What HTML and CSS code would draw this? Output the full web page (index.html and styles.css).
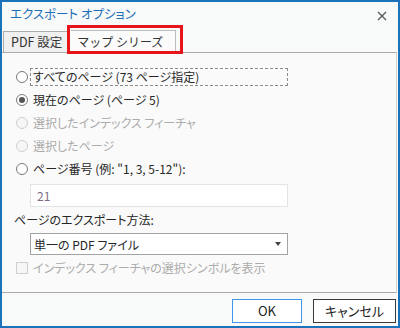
FILE: index.html
```html
<!DOCTYPE html>
<html lang="ja">
<head>
<meta charset="utf-8">
<link rel="stylesheet" href="styles.css">
</head>
<body>
<div class="window">
  <div class="titlebar">
    <span class="title">エクスポート オプション</span>
    <svg class="close" width="10" height="10" viewBox="0 0 10 10"><path d="M1 1 L9 9 M9 1 L1 9" stroke="#555" stroke-width="1.3" fill="none"/></svg>
  </div>
  <div class="tabs">
    <div class="tab">PDF 設定</div>
    <div class="tab active">マップ シリーズ</div>
    <div class="annot"></div>
  </div>
  <div class="panel">
    <div class="row"><span class="radio"></span><span class="label focus">すべてのページ (73 ページ指定)</span></div>
    <div class="row"><span class="radio checked"></span><span class="label">現在のページ (ページ 5)</span></div>
    <div class="row disabled"><span class="radio"></span><span class="label">選択したインデックス フィーチャ</span></div>
    <div class="row disabled"><span class="radio"></span><span class="label">選択したページ</span></div>
    <div class="row"><span class="radio"></span><span class="label">ページ番号 (例: "1, 3, 5-12"):</span></div>
    <div class="input">21</div>
    <div class="caption">ページのエクスポート方法:</div>
    <div class="select"><span>単一の PDF ファイル</span><span class="arrow"></span></div>
    <div class="row check disabled"><span class="checkbox"></span><span class="label">インデックス フィーチャの選択シンボルを表示</span></div>
  </div>
  <div class="footer">
    <div class="btn ok">OK</div>
    <div class="btn cancel">キャンセル</div>
  </div>
</div>
</body>
</html>
```

FILE: styles.css
```css
* { box-sizing: border-box; }
html, body { margin: 0; padding: 0; }
body {
  font-family: "Noto Sans CJK JP", "Noto Sans", sans-serif;
  font-feature-settings: "palt";
  font-size: 12px;
  color: #262626;
  background: #f8f8f8;
}
.window {
  width: 400px;
  height: 328px;
  border: 2px solid #1a72bb;
  background: #f8f9f9;
  display: flex;
  flex-direction: column;
  position: relative;
}
.titlebar {
  height: 29px;
  flex: none;
  display: flex;
  align-items: flex-start;
  justify-content: space-between;
  padding-left: 8px;
  padding-right: 11px;
}
.title {
  font-size: 12.5px;
  line-height: 24px;
  color: #1f6fb8;
}
.close { margin-top: 9px; }
.tabs {
  height: 21px;
  flex: none;
  display: flex;
  align-items: flex-end;
  padding-left: 1px;
  position: relative;
}
.tab {
  height: 21px;
  padding: 0 6px 0 7px;
  border: 1px solid #ababab;
  border-bottom: none;
  background: #f0f0f0;
  line-height: 20px;
  font-size: 12.5px;
  color: #333;
}
.tab.active {
  height: 23px;
  margin-bottom: -1px;
  margin-left: 2px;
  padding: 0 6px;
  background: #fbfbfb;
  border-left: none;
  border-color: #bdbdbd;
  position: relative;
  z-index: 1;
  line-height: 22px;
  width: 105px;
  font-size: 12px;
  font-feature-settings: normal;
}
.annot {
  position: absolute;
  left: 65px;
  top: -6px;
  width: 116px;
  height: 29px;
  border: 3px solid #e8141c;
  z-index: 2;
}
.panel {
  height: 241px;
  flex: none;
  margin-right: 1px;
  border-top: 1px solid #ababab;
  border-right: 1px solid #d4d4d4;
  border-bottom: 1px solid #ababab;
  background: #fafafa;
  padding-top: 12px;
  display: flex;
  flex-direction: column;
}
.row {
  height: 23px;
  display: flex;
  align-items: center;
  padding-left: 14px;
}
.radio {
  width: 12px;
  height: 12px;
  border: 1px solid #7a7a7a;
  border-radius: 50%;
  background: #fff;
  flex: none;
  position: relative;
}
.radio.checked::after {
  content: "";
  position: absolute;
  left: 2px;
  top: 2px;
  width: 6px;
  height: 6px;
  border-radius: 50%;
  background: #555;
}
.label {
  margin-left: 2px;
  height: 18px;
  line-height: 16px;
  padding: 0 2px;
  border: 1px solid transparent;
  white-space: nowrap;
}
.label.focus {
  border: 1px dashed #8c8c8c;
  width: 258px;
}
.disabled .label { color: #ababab; }
.disabled .radio { border-color: #cfcfcf; background: #f6f6f6; }
.input {
  margin-top: 4px;
  margin-left: 28px;
  width: 258px;
  height: 23px;
  border: 1px solid #e4e4e4;
  background: #fff;
  padding-left: 6px;
  line-height: 21px;
  color: #7d6b88;
}
.caption {
  height: 25px;
  line-height: 25px;
  padding-left: 12px;
}
.select {
  margin-top: 1px;
  margin-left: 28px;
  width: 258px;
  height: 22px;
  border: 1px solid #a3a3a3;
  background: #fff;
  display: flex;
  align-items: center;
  justify-content: space-between;
  padding: 0 6px 0 3px;
}
.arrow {
  width: 0;
  height: 0;
  border-left: 3px solid transparent;
  border-right: 3px solid transparent;
  border-top: 4px solid #444;
}
.row.check {
  margin-top: 1px;
  height: 24px;
}
.checkbox {
  width: 12px;
  height: 12px;
  border: 1px solid #cfcfcf;
  background: #f6f6f6;
  flex: none;
}
.check .label { margin-left: 2px; }
.footer {
  flex: 1;
  display: flex;
  justify-content: flex-end;
  align-items: flex-start;
  padding-top: 6px;
  padding-right: 2px;
  gap: 11px;
}
.btn {
  height: 24px;
  line-height: 22px;
  text-align: center;
  font-size: 13px;
  background: #fff;
  color: #222;
}
.btn.ok { width: 70px; border: 1px solid #3f95e8; }
.btn.cancel { width: 83px; border: 1px solid #3a3a3a; }
```
